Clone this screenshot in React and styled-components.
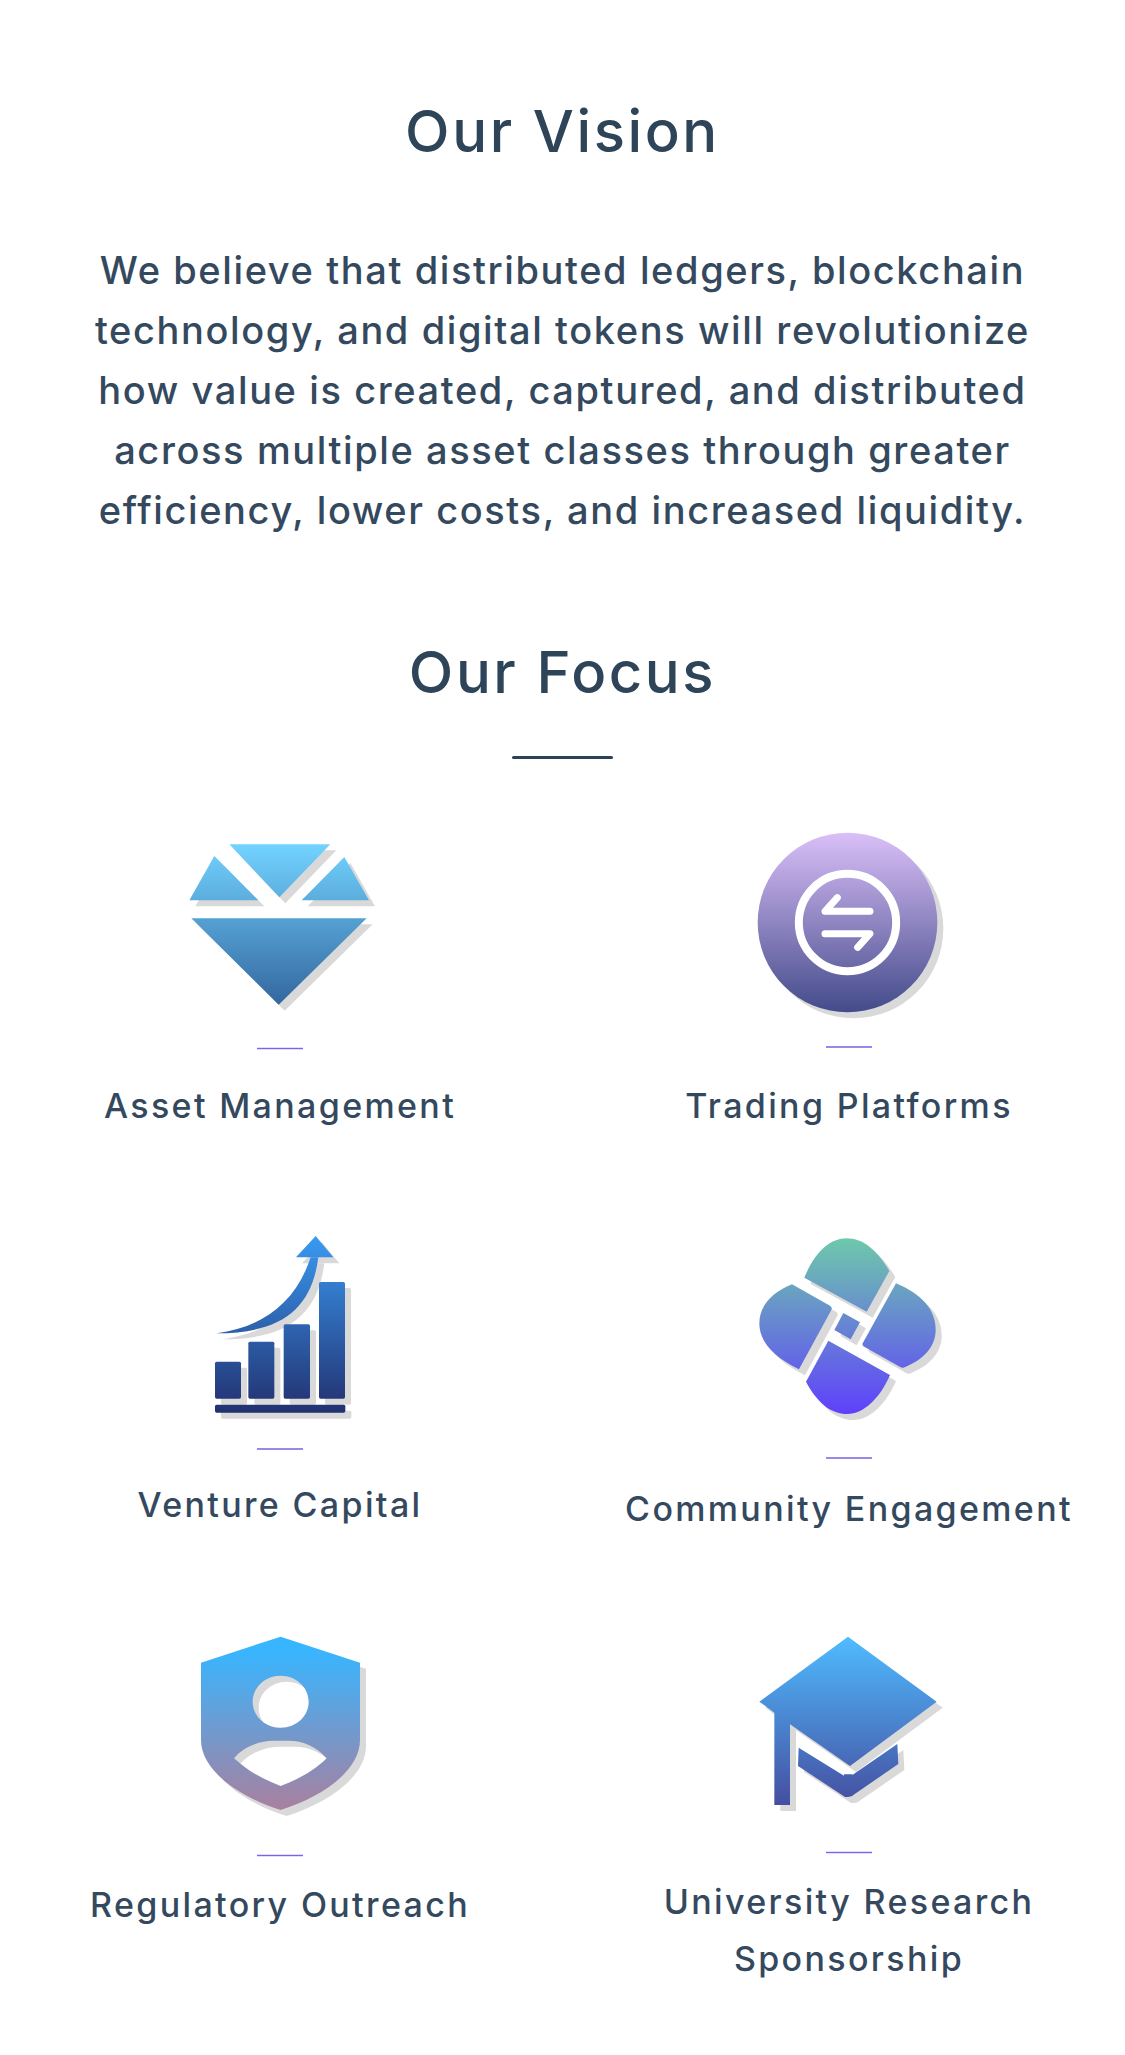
import React from "react";
import styled, { createGlobalStyle } from "styled-components";

const Global = createGlobalStyle`
  html, body { margin: 0; padding: 0; background: #fff; }
  body { font-family: Inter, "Liberation Sans", sans-serif; }
`;

const Page = styled.main`
  width: 1125px;
  min-height: 2055px;
  box-sizing: border-box;
  padding-top: 96px;
  background: #fff;
`;

const Heading = styled.h2`
  margin: 0;
  font-size: 58px;
  line-height: 70px;
  font-weight: 500;
  letter-spacing: 2.6px;
  color: #2e4459;
  text-align: center;
`;

const Paragraph = styled.p`
  margin: 74px 0 97px;
  font-size: 38px;
  line-height: 60px;
  font-weight: 500;
  letter-spacing: 1.6px;
  color: #34495e;
  text-align: center;
`;

const Rule = styled.div`
  width: 101px;
  height: 3px;
  margin: 49px auto 71px;
  background: #2c4258;
  border-radius: 2px;
`;

const Grid = styled.div`
  display: grid;
  grid-template-columns: 560px 565px;
  row-gap: 83px;
`;

const Item = styled.div`
  display: flex;
  flex-direction: column;
  align-items: center;
  padding-left: ${(p) => (p.$right ? "13px" : "0")};
`;

const IconSvg = styled.svg`
  display: block;
  width: 240px;
  height: ${(p) => p.$h}px;
  flex: none;
`;

const Divider = styled.div`
  width: 46px;
  height: ${(p) => (p.$thin ? "1px" : "2px")};
  background: ${(p) => (p.$thin ? "#7d62f2" : "#9b87ea")};
  box-shadow: ${(p) => (p.$thin ? "0 1px 0 #e3dcfc, 0 -1px 0 #e3dcfc" : "none")};
`;

const Label = styled.div`
  margin-top: ${(p) => p.$gap}px;
  font-size: 34px;
  line-height: 57px;
  font-weight: 500;
  letter-spacing: 2.35px;
  white-space: nowrap;
  color: #34495e;
  text-align: center;
`;

const SHADOW = "#d9d9d9";

function Icon({ id, h, ox, oy, top, right, from, to, y1, y2, children, extra }) {
  const cx = right ? 849 : 280;
  const vx = (cx - 120 - ox) * 3;
  const vy = (top - oy) * 3;
  return (
    <IconSvg $h={h} viewBox={`${vx} ${vy} 720 ${h * 3}`} aria-hidden="true">
      <defs>
        <linearGradient id={id} gradientUnits="userSpaceOnUse" x1="0" x2="0" y1={y1} y2={y2}>
          <stop offset="0" stopColor={from} />
          <stop offset="1" stopColor={to} />
        </linearGradient>
      </defs>
      <g transform="translate(18 18)" fill={SHADOW} stroke="none">{children}</g>
      <g fill={`url(#${id})`}>{children}</g>
      {extra}
    </IconSvg>
  );
}

const Diamond = () => (
  <Icon id="g1" h={218} ox={150} oy={810} top={830} from="#72d3ff" to="#33679f" y1={103} y2={584}>
    <polygon points="238,103 541,103 388,262" />
    <polygon points="193,138 325,271 118,271" />
    <polygon points="583,141 657,271 455,271" />
    <polygon points="124,325 650,325 386,584" />
  </Icon>
);

const Trading = () => (
  <Icon
    id="g2"
    h={216}
    ox={720}
    oy={810}
    top={830}
    right
    from="#dabff8"
    to="#434b8a"
    y1={68}
    y2={607}
    extra={
      <g fill="none" stroke="#fff" strokeLinecap="round" strokeLinejoin="round">
        <circle cx="382.5" cy="337.5" r="146" strokeWidth="24" />
        <path d="M450,304 H315 L352,263" strokeWidth="21" />
        <path d="M315,371 H450 L413,412" strokeWidth="21" />
      </g>
    }
  >
    <circle cx="382.5" cy="337.5" r="269.5" />
  </Icon>
);

const Chart = () => (
  <Icon id="g3" h={231} ox={180} oy={1210} top={1217} from="#3a9af2" to="#22306f" y1={78} y2={608}>
    <polygon points="407,78 348,142 460,142" />
    <path d="M110,370 C240,352 345,285 392,142 L415,142 C395,300 300,370 110,370 Z" />
    <rect x="105" y="455" width="78" height="111" rx="5" />
    <rect x="205" y="395" width="78" height="171" rx="5" />
    <rect x="311" y="343" width="79" height="223" rx="5" />
    <rect x="417" y="216" width="78" height="350" rx="5" />
    <rect x="105" y="584" width="391" height="24" rx="5" />
  </Icon>
);

const Petals = () => (
  <Icon id="g4" h={240} ox={730} oy={1210} top={1217} right from="#6ec9ab" to="#5f40fb" y1={85} y2={612}>
    <path d="M223,203 C255,125 300,85 350,85 C400,85 440,120 478,183 L410,305 Z" />
    <path d="M186,223 L300,287 Q308,292 304,300 L207,478 C130,440 88,395 88,340 C88,285 130,245 186,223 Z" />
    <path d="M498,220 C570,250 617,295 617,360 C617,410 580,450 520,473 Q516,474 512,472 L400,409 Q396,405 398,400 Z" />
    <path d="M295,392 L480,495 C450,565 400,612 352,612 C300,612 260,575 228,515 Z" />
    <polygon points="340,309 390,337 362,388 313,360" />
  </Icon>
);

const Shield = () => (
  <Icon id="g5" h={235} ox={180} oy={1620} top={1620} from="#38b5ff" to="#a8809f" y1={90} y2={570}>
    <path
      fillRule="evenodd"
      d="M302,50 L540,128 L540,360 C540,450 430,530 302,570 C175,530 63,450 63,360 L63,128 Z
         M302,167 C255,167 218,202 218,245 C218,288 255,323 302,323 C349,323 386,288 386,245 C386,202 349,167 302,167 Z
         M162,415 C190,380 240,362 280,362 L325,362 C370,362 410,380 440,415 C400,455 350,480 302,498 C255,480 205,455 162,415 Z"
    />
  </Icon>
);

const Cap = () => (
  <Icon id="g6" h={232} ox={740} oy={1620} top={1620} right from="#4fbcff" to="#454ea0" y1={50} y2={555}>
    <polygon points="324,50 590,245 330,438 150,313 150,555 103,555 103,278 58,245" />
    <path d="M176,383 L312,467 L312,463 L337,463 L337,465 L472,372 L475,432 L340,525 Q335,531 315,531 L174,438 Z" />
  </Icon>
);

const items = [
  { Art: Diamond, thin: true, gap: 28, label: "Asset Management" },
  { Art: Trading, right: true, gap: 29, label: "Trading Platforms" },
  { Art: Chart, gap: 26, label: "Venture Capital" },
  { Art: Petals, right: true, gap: 21, label: "Community Engagement" },
  { Art: Shield, thin: true, gap: 20, label: "Regulatory Outreach" },
  { Art: Cap, right: true, thin: true, gap: 20, label: <>University Research<br />Sponsorship</> },
];

export default function App() {
  return (
    <>
      <Global />
      <Page>
        <Heading>Our Vision</Heading>
        <Paragraph>
          We believe that distributed ledgers, blockchain<br />
          technology, and digital tokens will revolutionize<br />
          how value is created, captured, and distributed<br />
          across multiple asset classes through greater<br />
          efficiency, lower costs, and increased liquidity.
        </Paragraph>
        <Heading>Our Focus</Heading>
        <Rule />
        <Grid>
          {items.map(({ Art, right, thin, gap, label }, i) => (
            <Item key={i} $right={right}>
              <Art />
              <Divider $thin={thin} />
              <Label $gap={gap}>{label}</Label>
            </Item>
          ))}
        </Grid>
      </Page>
    </>
  );
}
